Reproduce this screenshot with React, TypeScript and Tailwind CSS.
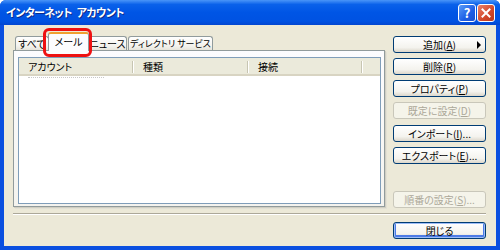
import React from "react";

type BtnProps = {
  children: React.ReactNode;
  disabled?: boolean;
  isDefault?: boolean;
  arrow?: boolean;
  className?: string;
};

function XpButton({ children, disabled, isDefault, arrow, className }: BtnProps) {
  const base =
    "relative flex h-[17px] w-[93px] items-center justify-center whitespace-nowrap rounded-[3px] border text-[10px] leading-none";
  const look = disabled
    ? "border-[#c9c7ba] bg-[#f5f4ea] text-[#aca899]"
    : "border-[#003c74] bg-[linear-gradient(180deg,#ffffff_0%,#f4f3ee_70%,#dcd7cb_100%)] text-black";
  const ring = isDefault
    ? "shadow-[inset_0_0_0_1px_#9dbdf8,inset_0_-1px_0_2px_#4d7be6]"
    : "";
  return (
    <div className={`${base} ${look} ${ring} ${className ?? ""}`}>
      <span>{children}</span>
      {arrow && (
        <span className="absolute right-[4px] top-[4px] h-0 w-0 border-y-[4px] border-l-[4px] border-y-transparent border-l-black" />
      )}
    </div>
  );
}

type TabProps = {
  children: React.ReactNode;
  width: string;
  selected?: boolean;
  className?: string;
};

function Tab({ children, width, selected, className }: TabProps) {
  if (selected) {
    return (
      <div
        className={`relative z-10 -mb-px flex h-[19px] items-start justify-center whitespace-nowrap rounded-t-[3px] border-x border-t-[2px] border-x-[#919b9c] border-t-[#f0a030] bg-[#fcfcfe] pt-[3px] text-[10px] leading-none ${width} ${className ?? ""}`}
      >
        {children}
      </div>
    );
  }
  return (
    <div
      className={`flex h-[14px] items-center justify-center whitespace-nowrap rounded-t-[3px] border-x border-t border-[#919b9c] bg-[linear-gradient(180deg,#ffffff,#f3f2ed_70%,#e6e4da)] leading-none ${width} ${className ?? ""}`}
    >
      {children}
    </div>
  );
}

function HeaderCol({ label, width }: { label: string; width: string }) {
  return (
    <div className={`relative flex h-full items-center pl-[9px] ${width}`}>
      <span>{label}</span>
      <span className="absolute right-0 top-[3px] h-[12px] w-[2px] border-l border-r border-l-[#c7c5b2] border-r-white" />
    </div>
  );
}

export default function App() {
  return (
    <div className="relative flex h-[250px] w-[500px] flex-col overflow-hidden rounded-t-[6px] bg-[#0a4fe0] text-black [font-family:'Noto_Sans_CJK_JP',sans-serif] [font-feature-settings:'palt']">
      {/* title bar */}
      <div className="flex h-[25px] items-center bg-[linear-gradient(180deg,#4a95f8_0%,#0a61ea_18%,#0055e5_50%,#0052e2_85%,#0346d0_100%)] pl-[6px] pr-[5px]">
        <span className="whitespace-nowrap text-[11px] font-bold tracking-[-0.6px] text-white [text-shadow:1px_1px_#0b2a8a]">
          インターネット <span className="ml-[3px]">アカウント</span>
        </span>
        <div className="ml-auto flex gap-[1px]">
          <div className="flex h-[18px] w-[18px] items-center justify-center rounded-[3px] border border-white bg-[linear-gradient(135deg,#5a9cf8,#1d5ee6_60%,#1a4fd0)] text-[13px] font-bold leading-none text-white">
            ?
          </div>
          <div className="flex h-[18px] w-[18px] items-center justify-center rounded-[3px] border border-white bg-[linear-gradient(135deg,#e8826a,#d2472a_60%,#b9381c)]">
            <svg width="10" height="10" viewBox="0 0 10 10">
              <path d="M1.5 1.5 L8.5 8.5 M8.5 1.5 L1.5 8.5" stroke="white" strokeWidth="2" strokeLinecap="square" />
            </svg>
          </div>
        </div>
      </div>

      {/* client area */}
      <div className="mx-[4px] mb-[4px] flex flex-1 flex-col bg-[#ece9d8] pl-[9px] pr-[10px] pt-[6px] text-[10px]">
        <div className="flex gap-[8px]">
          {/* tab control */}
          <div className="flex w-[372px] flex-col">
            <div className="flex h-[19px] items-end pl-[2px]">
              <Tab width="w-[34px]" className="text-[10px]">すべて</Tab>
              <Tab width="w-[41px]" selected className="-ml-[1px]">メール</Tab>
              <Tab width="w-[39px]" className="-ml-[1px] text-[10px]">ニュース</Tab>
              <Tab width="w-[85px]" className="ml-[1px] text-[9px]">
                ディレクトリ <span className="ml-[2px]">サービス</span>
              </Tab>
            </div>
            <div className="flex h-[157px] flex-col border border-[#919b9c] bg-[linear-gradient(180deg,#fcfcfe,#f4f3ee)] pb-[2px] pl-[4px] pr-[3px] pt-[6px] shadow-[1px_1px_0_#d0cec2,2px_2px_0_#e3e1d5]">
              <div className="flex flex-1 flex-col border border-[#7f9db9] bg-white">
                <div className="flex h-[18px] border-b-[2px] border-b-[#d8d4c2] bg-[#ebeadb]">
                  <HeaderCol label="アカウント" width="w-[115px]" />
                  <HeaderCol label="種類" width="w-[115px]" />
                  <HeaderCol label="接続" width="w-[114px]" />
                  <div className="flex-1" />
                </div>
                <div className="ml-[9px] mt-[1px] w-[76px] border-t border-dotted border-[#c8c8c8]" />
              </div>
            </div>
          </div>

          {/* button column */}
          <div className="flex flex-col pt-[5px]">
            <XpButton arrow>
              追加(<u>A</u>)
            </XpButton>
            <XpButton className="mt-[5px]">
              削除(<u>R</u>)
            </XpButton>
            <XpButton className="mt-[5px]">
              プロパティ(<u>P</u>)
            </XpButton>
            <XpButton disabled className="mt-[5px]">
              既定に設定(<u>D</u>)
            </XpButton>
            <XpButton className="mt-[6px]">
              インポート(<u>I</u>)...
            </XpButton>
            <XpButton className="mt-[5px]">
              エクスポート(<u>E</u>)...
            </XpButton>
            <XpButton disabled className="mt-[27px]">
              順番の設定(<u>S</u>)...
            </XpButton>
          </div>
        </div>

        {/* separator */}
        <div className="mt-[5px] h-[2px] border-b border-t border-b-white border-t-[#aca899]" />

        <div className="mt-[7px] flex justify-end">
          <XpButton isDefault>閉じる</XpButton>
        </div>
      </div>

      {/* red highlight over the mail tab */}
      <div className="absolute left-[43px] top-[28px] h-[29px] w-[49px] rounded-[6px] border-[3px] border-[#ee1111]" />
    </div>
  );
}
